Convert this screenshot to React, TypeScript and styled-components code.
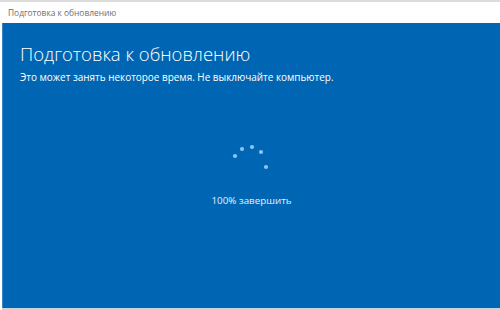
import React from "react";
import styled, { createGlobalStyle } from "styled-components";

const GlobalStyle = createGlobalStyle`
  html, body {
    margin: 0;
    padding: 0;
    background: #ffffff;
    width: 500px;
    height: 310px;
    overflow: hidden;
  }
`;

const Page = styled.div`
  display: flex;
  flex-direction: column;
  width: 500px;
  height: 310px;
  font-family: "Open Sans", "Noto Sans", sans-serif;
`;

const TitleBar = styled.div`
  display: flex;
  align-items: center;
  height: 21px;
  padding-left: 8px;
  border-top: 2px solid #dcdcdc;
  background: #ffffff;
  color: #6d6d6d;
  font-size: 8.4px;
`;

const Screen = styled.div`
  display: flex;
  flex-direction: column;
  height: 285px;
  margin-left: 2px;
  padding: 18px 0 0 17px;
  box-sizing: border-box;
  background: #0066b3;
  border-left: 1px solid #3a86c4;
  color: #ffffff;
`;

const Heading = styled.h1`
  margin: 0;
  font-size: 18.5px;
  font-weight: 300;
  line-height: 25px;
`;

const Subtitle = styled.p`
  margin: 4px 0 0;
  font-size: 9.95px;
  line-height: 14px;
`;

const Center = styled.div`
  display: flex;
  flex-direction: column;
  align-items: center;
  margin-top: 58px;
  padding-right: 17px;
`;

const Spinner = styled.svg`
  display: block;
  margin-left: -2px;
`;

const Progress = styled.div`
  margin-top: 22px;
  font-size: 9.8px;
  color: #e8f1fa;
`;

const Footer = styled.div`
  flex: 1;
  margin-left: 2px;
  background: #c9d3dc;
`;

const dots = [
  [6, 14],
  [13, 7],
  [23, 5],
  [32, 10],
  [37, 25],
];

export default function App() {
  return (
    <Page>
      <GlobalStyle />
      <TitleBar>Подготовка к обновлению</TitleBar>
      <Screen>
        <Heading>Подготовка к обновлению</Heading>
        <Subtitle>Это может занять некоторое время. Не выключайте компьютер.</Subtitle>
        <Center>
          <Spinner width="44" height="30" viewBox="0 0 44 30">
            {dots.map(([x, y], i) => (
              <circle key={i} cx={x} cy={y} r="2.1" fill="#8cc4f2" />
            ))}
          </Spinner>
          <Progress>100% завершить</Progress>
        </Center>
      </Screen>
      <Footer />
    </Page>
  );
}
